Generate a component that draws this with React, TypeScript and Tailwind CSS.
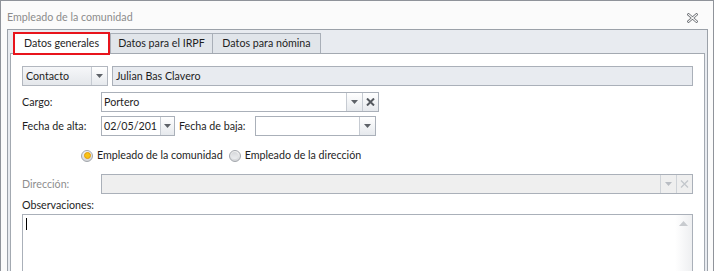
import React from 'react';

const Arrow = ({ light }: { light?: boolean }) => (
  <svg width="7" height="4" viewBox="0 0 7 4">
    <path d="M0 0h7L3.5 4z" fill={light ? '#b9bdc3' : '#5e6268'} />
  </svg>
);

const ClearX = ({ light }: { light?: boolean }) => (
  <svg width="9" height="8" viewBox="0 0 9 8">
    <path d="M1 0.5l7 7M8 0.5l-7 7" stroke={light ? '#c3c7cc' : '#54585e'} strokeWidth={light ? 1.3 : 2} />
  </svg>
);

const Btn = ({ children, w = 'w-4' }: { children: React.ReactNode; w?: string }) => (
  <div className={`${w} h-full flex items-center justify-center border-l border-[#c6cbd2] bg-gradient-to-b from-white to-[#e6e9ed]`}>
    {children}
  </div>
);

const Radio = ({ checked }: { checked?: boolean }) => (
  <div className="w-[12px] h-[12px] rounded-full border border-[#a2a6ac] bg-gradient-to-b from-[#f4f4f4] to-[#d4d6d9] flex items-center justify-center">
    {checked ? (
      <div className="w-[7px] h-[7px] rounded-full bg-[#f8c315] border border-[#e29a0c]" />
    ) : (
      <div className="w-[7px] h-[7px] rounded-full bg-gradient-to-b from-[#d6d8db] to-[#eceef0]" />
    )}
  </div>
);

export default function App() {
  return (
    <div className="w-[715px] h-[271px] bg-white overflow-hidden font-['Lato',sans-serif] text-[10.7px] text-[#1e1e1e]">
      <div className="w-[714px] h-[271px] border-l border-t border-r border-[#8f939a] bg-[#fbfbfb] flex flex-col">
        {/* title */}
        <div className="h-[28px] shrink-0 flex items-center justify-between pl-[6px] pr-[15px] pt-[5px]">
          <span className="text-[#8c8c8c]">Empleado de la comunidad</span>
          <svg width="11" height="10" viewBox="0 0 11 10">
            <path d="M1.5 1.5l8 7M9.5 1.5l-8 7" stroke="#6a6d72" strokeWidth="2.6" strokeLinecap="square" />
            <path d="M1.5 1.5l8 7M9.5 1.5l-8 7" stroke="#fbfbfb" strokeWidth="1.1" strokeLinecap="square" />
          </svg>
        </div>

        {/* tab control */}
        <div className="flex-1 ml-[6px] mr-[5px] border-l border-t border-r border-[#9ba1a9] bg-[#e8ebf0] flex flex-col">
          <div className="h-[23px] shrink-0 flex items-end pl-[5px]">
            <div className="relative z-10 w-[97px] h-[23px] mb-[-2px] border-2 border-[#e8141c] bg-white flex items-center justify-center pb-[1px]">
              Datos generales
            </div>
            <div className="w-[103px] h-[20px] border-l border-t border-r border-[#a9afb8] bg-[#e1e5ea] flex items-center justify-center">
              Datos para el IRPF
            </div>
            <div className="w-[108px] h-[20px] border-t border-r border-[#a9afb8] bg-[#e1e5ea] flex items-center justify-center">
              Datos para nómina
            </div>
          </div>

          <div className="flex-1 mx-[2px] border border-[#a3a9b1] bg-white pl-[11px] pr-[11px] pt-[12px] flex flex-col">
            {/* contacto */}
            <div className="flex gap-[4px] h-5">
              <div className="w-[86px] h-5 border border-[#b2b7bf] bg-gradient-to-b from-[#f6f7f9] to-[#e4e7eb] flex items-stretch">
                <span className="flex-1 pl-[3px] flex items-center">Contacto</span>
                <Btn><Arrow /></Btn>
              </div>
              <div className="flex-1 h-5 border border-[#aab0b9] bg-[#e8ebf0] pl-[3px] flex items-center">
                Julian Bas Clavero
              </div>
            </div>

            {/* cargo */}
            <div className="flex items-center mt-[6px] h-5">
              <span className="w-[79px]">Cargo:</span>
              <div className="w-[278px] h-5 border border-[#aab0b9] bg-white flex items-stretch">
                <span className="flex-1 pl-[2px] flex items-center">Portero</span>
                <Btn><Arrow /></Btn>
                <Btn><ClearX /></Btn>
              </div>
            </div>

            {/* fechas */}
            <div className="flex items-center mt-[4px] h-5">
              <span className="w-[79px]">Fecha de alta:</span>
              <div className="w-[74px] h-5 border border-[#aab0b9] bg-white flex items-stretch">
                <span className="flex-1 pl-[2px] flex items-center overflow-hidden whitespace-nowrap">02/05/201</span>
                <Btn w="w-[14px]"><Arrow /></Btn>
              </div>
              <span className="w-[80px] pl-[4px]">Fecha de baja:</span>
              <div className="w-[121px] h-5 border border-[#aab0b9] bg-white flex items-stretch">
                <span className="flex-1" />
                <Btn><Arrow /></Btn>
              </div>
            </div>

            {/* radios */}
            <div className="flex items-center mt-[13px] h-[13px] pl-[59px]">
              <Radio checked />
              <span className="ml-[4px]">Empleado de la comunidad</span>
              <span className="ml-[6px]"><Radio /></span>
              <span className="ml-[4px]">Empleado de la dirección</span>
            </div>

            {/* direccion */}
            <div className="flex items-center mt-[12px] h-5">
              <span className="w-[79px] text-[#8e8e8e]">Dirección:</span>
              <div className="flex-1 h-5 border border-[#aab0b9] bg-[#efefef] flex items-stretch">
                <span className="flex-1" />
                <div className="w-4 h-full flex items-center justify-center border-l border-[#cfd3d8]"><Arrow light /></div>
                <div className="w-4 h-full flex items-center justify-center border-l border-[#cfd3d8]"><ClearX light /></div>
              </div>
            </div>

            {/* observaciones */}
            <div className="mt-[3px] h-[16px] flex items-center">Observaciones:</div>
            <div className="mt-[1px] h-[80px] shrink-0 border border-[#aab0b9] bg-white flex">
              <div className="flex-1 pl-[3px] pt-[3px]">
                <div className="w-[1px] h-[12px] bg-black" />
              </div>
              <div className="w-[17px] h-full bg-gradient-to-r from-white to-[#eeeff1] flex justify-center pt-[6px]">
                <svg width="9" height="5" viewBox="0 0 9 5">
                  <path d="M0 5h9L4.5 0z" fill="#c8cbcf" />
                </svg>
              </div>
            </div>
          </div>
        </div>
      </div>
    </div>
  );
}
